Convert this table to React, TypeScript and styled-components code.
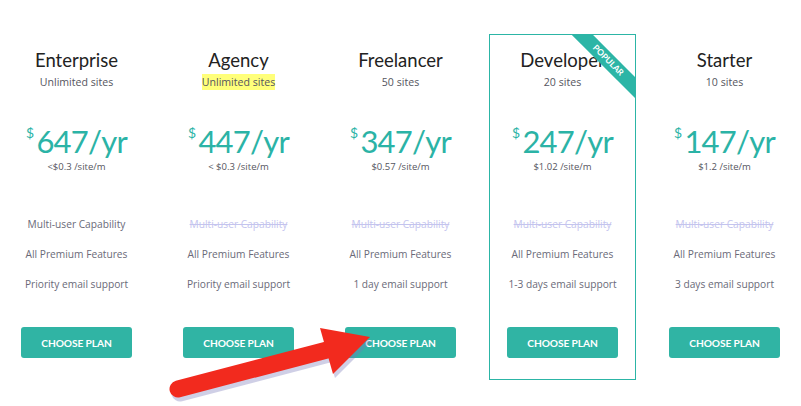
import React from 'react';
import styled, { createGlobalStyle } from 'styled-components';

const GlobalStyle = createGlobalStyle`
  html, body {
    margin: 0;
    padding: 0;
    background: #ffffff;
  }
  body {
    font-family: 'Open Sans', 'Liberation Sans', sans-serif;
  }
`;

interface Plan {
  name: string;
  sites: string;
  price: string;
  perSite: string;
  multiUser: boolean;
  support: string;
  highlightSites?: boolean;
  popular?: boolean;
}

const plans: Plan[] = [
  { name: 'Enterprise', sites: 'Unlimited sites', price: '647', perSite: '<$0.3 /site/m', multiUser: true, support: 'Priority email support' },
  { name: 'Agency', sites: 'Unlimited sites', price: '447', perSite: '< $0.3 /site/m', multiUser: false, support: 'Priority email support', highlightSites: true },
  { name: 'Freelancer', sites: '50 sites', price: '347', perSite: '$0.57 /site/m', multiUser: false, support: '1 day email support' },
  { name: 'Developer', sites: '20 sites', price: '247', perSite: '$1.02 /site/m', multiUser: false, support: '1-3 days email support', popular: true },
  { name: 'Starter', sites: '10 sites', price: '147', perSite: '$1.2 /site/m', multiUser: false, support: '3 days email support' },
];

const Page = styled.div`
  position: relative;
  width: 801px;
  height: 406px;
  overflow: hidden;
`;

const Columns = styled.div`
  display: grid;
  grid-template-columns: repeat(5, 147px);
  column-gap: 15px;
  padding: 34px 3px 0;
`;

const Column = styled.div<{ $popular?: boolean }>`
  position: relative;
  display: flex;
  flex-direction: column;
  align-items: center;
  border: 1px solid ${({ $popular }) => ($popular ? '#2cb5a6' : 'transparent')};
  padding: 13px 0 21px;
  overflow: hidden;
`;

const Title = styled.h2`
  margin: 0;
  font-family: 'Lato', 'Liberation Sans', sans-serif;
  font-weight: 400;
  font-size: 18.5px;
  line-height: 24px;
  color: #222222;
`;

const Sites = styled.span<{ $highlight?: boolean }>`
  margin-top: 2px;
  font-size: 10.6px;
  line-height: 16px;
  color: #555560;
  background: ${({ $highlight }) => ($highlight ? '#ffff7a' : 'transparent')};
`;

const Price = styled.div`
  margin-top: 33px;
  display: flex;
  align-items: flex-start;
  font-family: 'Lato', 'Liberation Sans', sans-serif;
  font-size: 31px;
  line-height: 36px;
  letter-spacing: -0.8px;
  color: #2bb3a6;
`;

const Dollar = styled.span`
  font-size: 14px;
  line-height: 20px;
  margin-right: 3px;
`;

const PerSite = styled.span`
  margin-top: 1px;
  font-size: 9.5px;
  line-height: 14px;
  color: #555560;
`;

const Features = styled.ul`
  list-style: none;
  margin: 35px 0 0;
  padding: 0;
  text-align: center;
`;

const Feature = styled.li<{ $off?: boolean }>`
  font-size: 10.2px;
  line-height: 30px;
  color: ${({ $off }) => ($off ? '#c4c4ee' : '#6a6a78')};
  text-decoration: ${({ $off }) => ($off ? 'line-through' : 'none')};
`;

const ChooseButton = styled.button`
  margin-top: 28px;
  width: 111px;
  height: 31px;
  border: none;
  border-radius: 3px;
  background: #30b4a4;
  color: #ffffff;
  font-family: 'Lato', 'Liberation Sans', sans-serif;
  font-weight: 700;
  font-size: 10.2px;
  letter-spacing: -0.1px;
  cursor: pointer;
`;

const RibbonCorner = styled.div`
  position: absolute;
  top: 0;
  right: 0;
  width: 70px;
  height: 70px;
  overflow: hidden;
  pointer-events: none;
`;

const RibbonBand = styled.div`
  position: absolute;
  left: -7px;
  top: 18px;
  width: 100px;
  height: 15px;
  background: #2cb5a6;
  color: #ffffff;
  font-family: 'Lato', 'Liberation Sans', sans-serif;
  font-weight: 700;
  font-size: 8.5px;
  line-height: 15px;
  text-align: center;
  transform: rotate(45deg);
`;

const ArrowLayer = styled.svg`
  position: absolute;
  top: 0;
  left: 0;
  pointer-events: none;
`;

function Arrow() {
  const shaft = 'M178 389 L327 350';
  const head = '320,328 370,337 333,374';
  return (
    <ArrowLayer width="801" height="406" viewBox="0 0 801 406">
      <g transform="translate(2 4)" opacity="0.35">
        <path d={shaft} stroke="#7878b8" strokeWidth="17" strokeLinecap="round" />
        <polygon points={head} fill="#7878b8" />
      </g>
      <path d={shaft} stroke="#f22a1e" strokeWidth="17" strokeLinecap="round" />
      <polygon points={head} fill="#f22a1e" strokeLinejoin="round" />
    </ArrowLayer>
  );
}

export default function App() {
  return (
    <Page>
      <GlobalStyle />
      <Columns>
        {plans.map((plan) => (
          <Column key={plan.name} $popular={plan.popular}>
            {plan.popular && (
              <RibbonCorner>
                <RibbonBand>POPULAR</RibbonBand>
              </RibbonCorner>
            )}
            <Title>{plan.name}</Title>
            <Sites $highlight={plan.highlightSites}>{plan.sites}</Sites>
            <Price>
              <Dollar>$</Dollar>
              {plan.price}/yr
            </Price>
            <PerSite>{plan.perSite}</PerSite>
            <Features>
              <Feature $off={!plan.multiUser}>Multi-user Capability</Feature>
              <Feature>All Premium Features</Feature>
              <Feature>{plan.support}</Feature>
            </Features>
            <ChooseButton>CHOOSE PLAN</ChooseButton>
          </Column>
        ))}
      </Columns>
      <Arrow />
    </Page>
  );
}
